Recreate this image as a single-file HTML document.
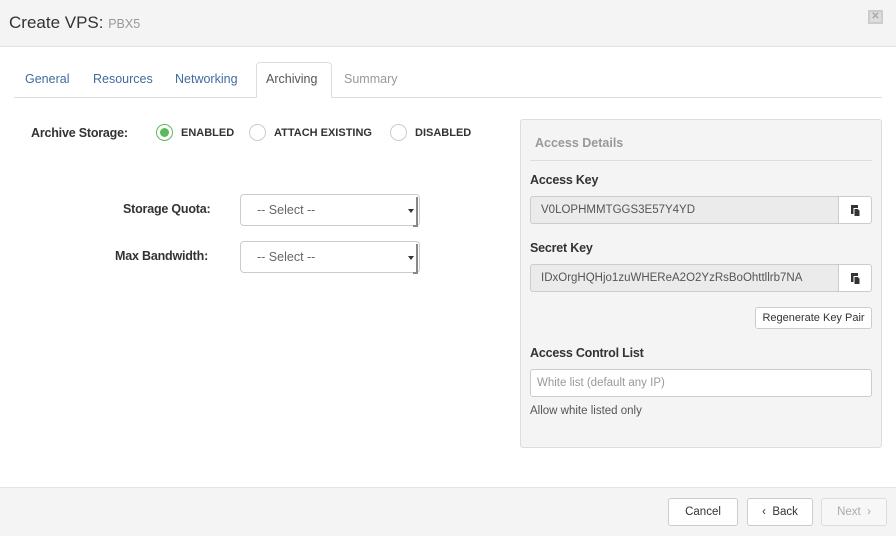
<!DOCTYPE html><html><head><style>
*{box-sizing:border-box;margin:0;padding:0}
body{width:896px;height:536px;position:relative;font-family:"Liberation Sans",sans-serif;background:#fff;color:#333;overflow:hidden}
.a{position:absolute}
.hdr{left:0;top:0;width:896px;height:47px;background:#f4f4f4;border-bottom:1px solid #e3e3e3}
.tab{top:72px;font-size:12.5px;color:#3f6c9e}
.lbl{font-size:12.5px;font-weight:bold;color:#333;letter-spacing:-0.2px}
.radio{width:17px;height:17px;border:1px solid #ccc;border-radius:50%;background:#fff}
.rt{font-size:11px;font-weight:bold;color:#333;top:127px}
.sel{width:180px;height:32px;border:1px solid #ccc;border-radius:4px;background:#fff;font-size:12.5px;color:#666;padding:8px 0 0 16px}
.sel:after{content:"";position:absolute;right:1px;top:2px;width:3px;height:28px;border-right:2px solid #888;border-bottom:2px solid #888}
.sel i{position:absolute;right:5px;top:14px;border:3px solid transparent;border-top:4px solid #333}
.inp{height:28px;border:1px solid #ccc;border-radius:3px 0 0 3px;background:#ebebeb;font-size:11.5px;color:#555;padding:7px 0 0 10px}
.cp{width:34px;height:28px;border:1px solid #ccc;border-radius:0 3px 3px 0;background:#fff}
.btn{height:28px;border:1px solid #ccc;border-radius:3px;background:#fff;font-size:11.5px;color:#333;text-align:center;line-height:26px}
</style></head><body>
<div class="a hdr"></div>
<div class="a" style="left:9px;top:13px;font-size:17px;color:#333">Create VPS: <span style="font-size:12.5px;color:#999">PBX5</span></div>
<div class="a" style="left:868px;top:10px;width:15px;height:14px;border:2px solid #ccc;background:#ddd;color:#aaa;font-size:10px;line-height:10px;text-align:center;font-weight:bold">✕</div>
<div class="a" style="left:14px;top:97px;width:868px;height:1px;background:#ddd"></div>
<div class="a" style="left:256px;top:62px;width:76px;height:36px;border:1px solid #ddd;border-bottom:1px solid #fff;border-radius:4px 4px 0 0;background:#fff"></div>
<div class="a tab" style="left:25px">General</div>
<div class="a tab" style="left:93px">Resources</div>
<div class="a tab" style="left:175px">Networking</div>
<div class="a tab" style="left:266px;color:#555">Archiving</div>
<div class="a tab" style="left:344px;color:#999">Summary</div>
<div class="a lbl" style="left:31px;top:126px">Archive Storage:</div>
<div class="a radio" style="left:156px;top:124px;border-color:#5cb85c"><div style="margin:3px;width:9px;height:9px;border-radius:50%;background:#5cb85c"></div></div>
<div class="a rt" style="left:181px">ENABLED</div>
<div class="a radio" style="left:249px;top:124px"></div>
<div class="a rt" style="left:274px">ATTACH EXISTING</div>
<div class="a radio" style="left:390px;top:124px"></div>
<div class="a rt" style="left:415px">DISABLED</div>
<div class="a lbl" style="left:123px;top:202px">Storage Quota:</div>
<div class="a sel" style="left:240px;top:194px">-- Select --<i></i></div>
<div class="a lbl" style="left:115px;top:249px">Max Bandwidth:</div>
<div class="a sel" style="left:240px;top:241px">-- Select --<i></i></div>
<div class="a" style="left:520px;top:119px;width:362px;height:329px;background:#f4f4f4;border:1px solid #ddd;border-radius:3px"></div>
<div class="a" style="left:535px;top:136px;font-size:12.5px;color:#999;font-weight:bold">Access Details</div>
<div class="a" style="left:530px;top:160px;width:342px;height:1px;background:#ddd"></div>
<div class="a lbl" style="left:530px;top:173px">Access Key</div>
<div class="a inp" style="left:530px;top:196px;width:309px">V0LOPHMMTGGS3E57Y4YD</div>
<div class="a cp" style="left:838px;top:196px"><svg width="34" height="28"><rect x="12" y="8" width="7" height="9" fill="#333"/><path d="M15 11.5h4l2 2v6h-6z" fill="#333" stroke="#fff" stroke-width="1"/></svg></div>
<div class="a lbl" style="left:530px;top:241px">Secret Key</div>
<div class="a inp" style="left:530px;top:264px;width:309px">IDxOrgHQHjo1zuWHEReA2O2YzRsBoOhttllrb7NA</div>
<div class="a cp" style="left:838px;top:264px"><svg width="34" height="28"><rect x="12" y="8" width="7" height="9" fill="#333"/><path d="M15 11.5h4l2 2v6h-6z" fill="#333" stroke="#fff" stroke-width="1"/></svg></div>
<div class="a btn" style="left:755px;top:307px;width:117px;height:22px;line-height:20px;font-size:11px">Regenerate Key Pair</div>
<div class="a lbl" style="left:530px;top:346px">Access Control List</div>
<div class="a" style="left:530px;top:369px;width:342px;height:28px;border:1px solid #ccc;border-radius:3px;background:#fff;font-size:11.5px;color:#999;padding:7px 0 0 6px">White list (default any IP)</div>
<div class="a" style="left:530px;top:405px;font-size:11.5px;color:#555">Allow white listed only</div>
<div class="a" style="left:0;top:487px;width:896px;height:49px;background:#f4f4f4;border-top:1px solid #e3e3e3"></div>
<div class="a btn" style="left:668px;top:498px;width:70px">Cancel</div>
<div class="a btn" style="left:747px;top:498px;width:66px">‹&nbsp; Back</div>
<div class="a btn" style="left:821px;top:498px;width:66px;color:#aaa;background:#f7f7f7;border-color:#ddd">Next &nbsp;›</div>
</body></html>
